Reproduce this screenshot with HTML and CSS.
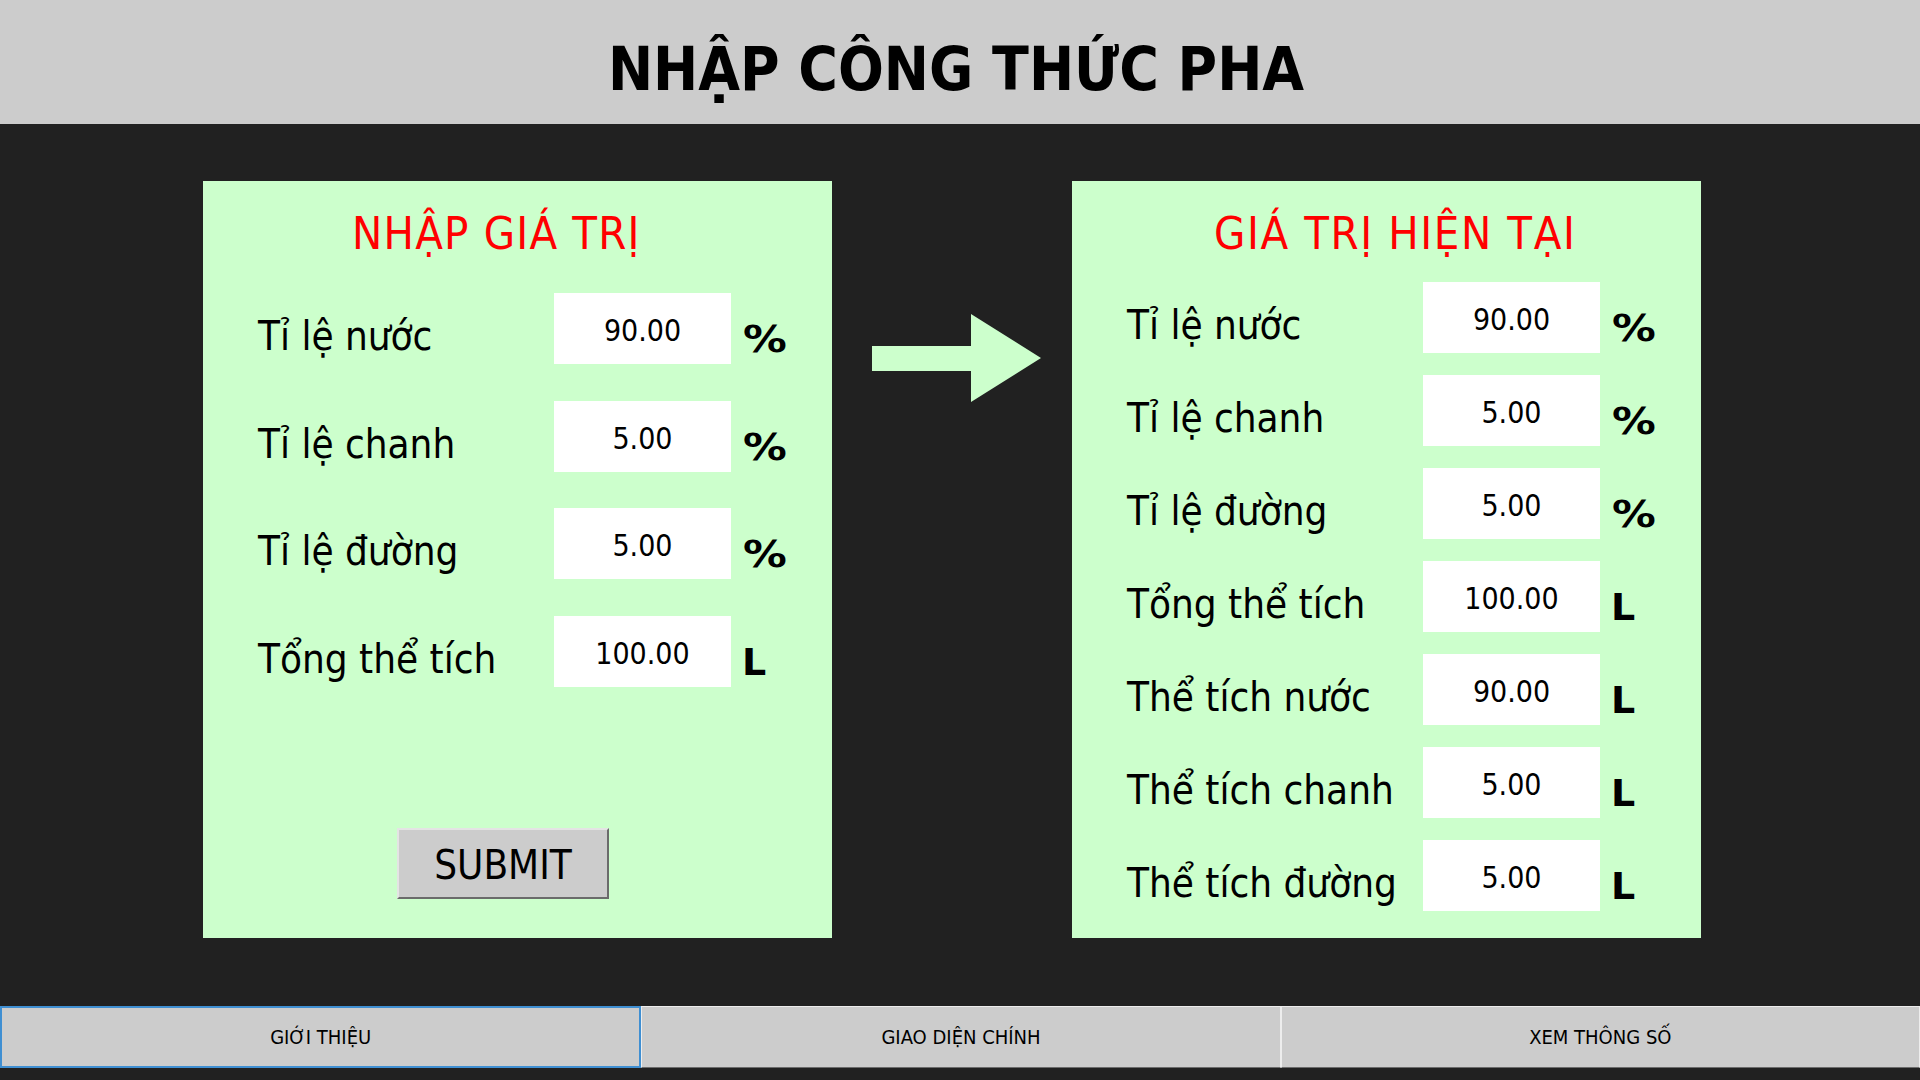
FILE: index.html
```html
<!DOCTYPE html>
<html lang="vi">
<head>
<meta charset="utf-8">
<title>Nhập công thức pha</title>
<link rel="stylesheet" href="styles.css">
</head>
<body>
<header class="topbar">
  <h1 class="page-title">NHẬP CÔNG THỨC PHA</h1>
</header>
<main class="workspace">
  <section class="panel panel-input">
    <h2 class="panel-title">NHẬP GIÁ TRỊ</h2>
    <div class="rows">
      <div class="row"><span class="label">Tỉ lệ nước</span><span class="value">90.00</span><span class="unit unit-pct">%</span></div>
      <div class="row"><span class="label">Tỉ lệ chanh</span><span class="value">5.00</span><span class="unit unit-pct">%</span></div>
      <div class="row"><span class="label">Tỉ lệ đường</span><span class="value">5.00</span><span class="unit unit-pct">%</span></div>
      <div class="row"><span class="label">Tổng thể tích</span><span class="value">100.00</span><span class="unit">L</span></div>
    </div>
    <button class="submit" type="button">SUBMIT</button>
  </section>
  <div class="arrow-col">
    <svg class="arrow" width="169" height="88" viewBox="0 0 169 88" aria-hidden="true">
      <polygon points="0,32 99,32 99,0 169,44 99,88 99,57 0,57" fill="#ccffcc"/>
    </svg>
  </div>
  <section class="panel panel-current">
    <h2 class="panel-title">GIÁ TRỊ HIỆN TẠI</h2>
    <div class="rows">
      <div class="row"><span class="label">Tỉ lệ nước</span><span class="value">90.00</span><span class="unit unit-pct">%</span></div>
      <div class="row"><span class="label">Tỉ lệ chanh</span><span class="value">5.00</span><span class="unit unit-pct">%</span></div>
      <div class="row"><span class="label">Tỉ lệ đường</span><span class="value">5.00</span><span class="unit unit-pct">%</span></div>
      <div class="row"><span class="label">Tổng thể tích</span><span class="value">100.00</span><span class="unit">L</span></div>
      <div class="row"><span class="label">Thể tích nước</span><span class="value">90.00</span><span class="unit">L</span></div>
      <div class="row"><span class="label">Thể tích chanh</span><span class="value">5.00</span><span class="unit">L</span></div>
      <div class="row"><span class="label">Thể tích đường</span><span class="value">5.00</span><span class="unit">L</span></div>
    </div>
  </section>
</main>
<nav class="tabs">
  <button class="tab tab-active" type="button">GIỚI THIỆU</button>
  <button class="tab" type="button">GIAO DIỆN CHÍNH</button>
  <button class="tab" type="button">XEM THÔNG SỐ</button>
</nav>
</body>
</html>
```
FILE: styles.css
```css
* { box-sizing: border-box; }

html, body {
  margin: 0;
  padding: 0;
}

body {
  width: 1920px;
  height: 1080px;
  overflow: hidden;
  background: #212121;
  font-family: "DejaVu Sans Condensed", "DejaVu Sans", sans-serif;
  font-stretch: condensed;
  color: #000;
}

.topbar {
  height: 124px;
  background: #cccccc;
  padding-top: 14px;
}

.page-title {
  margin: 0;
  font-size: 60px;
  font-weight: bold;
  line-height: 110px;
  text-align: center;
  padding-right: 8px;
}

.workspace {
  height: 882px;
  display: flex;
  align-items: flex-start;
  padding: 57px 0 0 203px;
}

.panel {
  width: 629px;
  height: 757px;
  background: #ccffcc;
  padding-top: 26px;
}

.panel-title {
  margin: 0;
  font-size: 45px;
  font-weight: normal;
  line-height: 54px;
  letter-spacing: 1.2px;
  color: #ff0000;
  white-space: nowrap;
}

.panel-input .panel-title { padding-left: 149px; }
.panel-current .panel-title { padding-left: 142px; letter-spacing: 1.6px; }

.rows {
  display: flex;
  flex-direction: column;
}

.panel-input .rows { margin-top: 32px; gap: 36.5px; }
.panel-current .rows { margin-top: 21px; gap: 22px; }

.row {
  display: flex;
  align-items: flex-start;
  height: 71px;
  padding-left: 55px;
}

.label {
  width: 296px;
  font-size: 40px;
  line-height: 87px;
  white-space: nowrap;
}

.value {
  width: 177px;
  height: 71px;
  background: #ffffff;
  font-size: 30px;
  line-height: 67px;
  padding-top: 4px;
  text-align: center;
}

.unit {
  display: inline-block;
  margin-left: 11px;
  font-family: "DejaVu Sans", sans-serif;
  font-stretch: normal;
  font-weight: bold;
  font-size: 38px;
  line-height: 93px;
}

.unit-pct {
  margin-left: 12px;
  transform: scaleX(1.15);
  transform-origin: left center;
}

.submit {
  display: block;
  margin: 141.5px 0 0 194px;
  width: 212px;
  height: 71px;
  padding: 3px 0 0;
  background: #cccccc;
  border: 2px solid;
  border-color: #e4e4e4 #6b6b6b #6b6b6b #e4e4e4;
  font-family: inherit;
  font-stretch: inherit;
  font-size: 40px;
  line-height: 64px;
  color: #000;
}

.arrow-col {
  width: 240px;
  padding: 133px 0 0 40px;
}

.arrow { display: block; }

.tabs {
  display: flex;
  height: 62px;
}

.tab {
  flex: 1 1 0;
  height: 62px;
  margin: 0;
  padding: 0;
  background: #cccccc;
  border: 1px solid;
  border-color: #ededed #ededed #6b6b6b #ededed;
  font-family: inherit;
  font-stretch: inherit;
  font-size: 20px;
  color: #000;
}

.tab-active {
  border: 2px solid #3f8fd2;
}
```
